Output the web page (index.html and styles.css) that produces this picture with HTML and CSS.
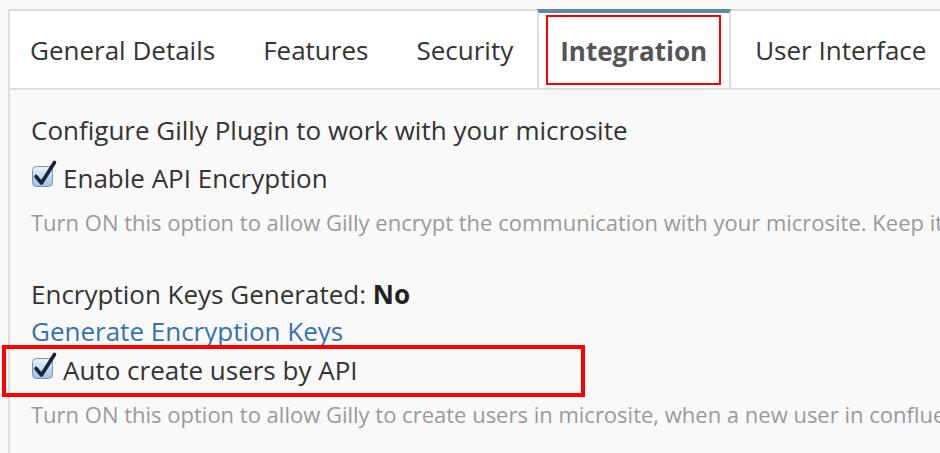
FILE: index.html
```
<!DOCTYPE html>
<html lang="en">
<head>
  <meta charset="UTF-8" />
  <title>Gilly Plugin - Integration</title>
  <link rel="stylesheet" href="styles.css">
</head>
<body>
  <nav class="tabs">
    <a class="tab" href="#">General Details</a>
    <a class="tab" href="#">Features</a>
    <a class="tab" href="#">Security</a>
    <a class="tab active" href="#">Integration</a>
    <a class="tab" href="#">User Interface</a>
  </nav>

  <div class="panel">
    <p class="intro">Configure Gilly Plugin to work with your microsite</p>

    <label class="check check-first">
      <svg class="box" width="26" height="28" viewBox="0 0 26 28">
        <defs>
          <linearGradient id="boxfill" x1="0" y1="0" x2="0" y2="1">
            <stop offset="0" stop-color="#e9f1fa"/>
            <stop offset="1" stop-color="#9fc2e6"/>
          </linearGradient>
        </defs>
        <rect x="1.5" y="6.5" width="20" height="20" rx="4" fill="url(#boxfill)" stroke="#7f93a8"/>
        <path d="M5 16.5 L10.5 23 L23.5 2.5" fill="none" stroke="#17243a" stroke-width="3.6" stroke-linecap="round" stroke-linejoin="round"/>
      </svg>
      Enable API Encryption
    </label>
    <p class="hint">Turn ON this option to allow Gilly encrypt the communication with your microsite. Keep it ON for better security of your data.</p>

    <p class="status">Encryption Keys Generated: <strong>No</strong></p>
    <a class="link" href="#">Generate Encryption Keys</a>

    <label class="check">
      <svg class="box" width="26" height="28" viewBox="0 0 26 28">
        <rect x="1.5" y="6.5" width="20" height="20" rx="4" fill="url(#boxfill)" stroke="#7f93a8"/>
        <path d="M5 16.5 L10.5 23 L23.5 2.5" fill="none" stroke="#17243a" stroke-width="3.6" stroke-linecap="round" stroke-linejoin="round"/>
      </svg>
      Auto create users by API
    </label>
    <p class="hint">Turn ON this option to allow Gilly to create users in microsite, when a new user in confluence logs in to the microsite.</p>
  </div>

  <div class="mark mark-tab"></div>
  <div class="mark mark-row"></div>
</body>
</html>
```

FILE: styles.css
```
body {
  margin: 0;
  height: 453px;
  font-family: "Open Sans", sans-serif;
  background: #f9f9f9;
  color: #333;
  overflow: hidden;
  white-space: nowrap;
}
.tabs {
  display: flex;
  height: 77px;
  margin: 9px 0 0 8px;
  border: 2px solid #ddd;
  border-right: none;
  background: #fff;
}
.tab {
  display: flex;
  align-items: center;
  padding: 0 22px;
  border-left: 2px solid transparent;
  border-right: 2px solid transparent;
  font-size: 26px;
  color: #333;
  text-decoration: none;
}
.tab:first-child {
  margin-left: -4px;
}
.tab.active {
  margin: -2px 0 -2px;
  padding: 0 22px 2px 21px;
  border-top: 4px solid #5e8a9f;
  border-left-color: #ddd;
  border-right-color: #ddd;
  font-weight: bold;
  color: #555;
}
.panel {
  box-sizing: border-box;
  height: 365px;
  margin-left: 8px;
  padding: 23px 0 0 21px;
  border-left: 2px solid #ddd;
  overflow: hidden;
}
.intro, .status {
  margin: 0;
  font-size: 26px;
  line-height: 34px;
}
.check {
  display: flex;
  align-items: center;
  gap: 6px;
  margin-top: 14px;
  font-size: 26px;
  line-height: 34px;
}
.check .box {
  margin-top: -8px;
  flex: none;
}
.hint {
  margin: 13px 0 0;
  font-size: 22px;
  line-height: 28px;
  color: #999;
}
.status {
  margin-top: 41px;
}
.status strong {
  color: #222;
}
.link {
  display: block;
  margin-top: 3px;
  font-size: 26px;
  line-height: 34px;
  color: #3572b0;
  text-decoration: none;
}
.check:not(.check-first) {
  margin-top: 5px;
}
.mark {
  position: absolute;
  border: 2px solid #f00;
}
.mark-tab {
  left: 546px;
  top: 15px;
  width: 171px;
  height: 66px;
}
.mark-row {
  left: 2px;
  top: 345px;
  width: 575px;
  height: 44px;
  border-width: 4px;
}
```
